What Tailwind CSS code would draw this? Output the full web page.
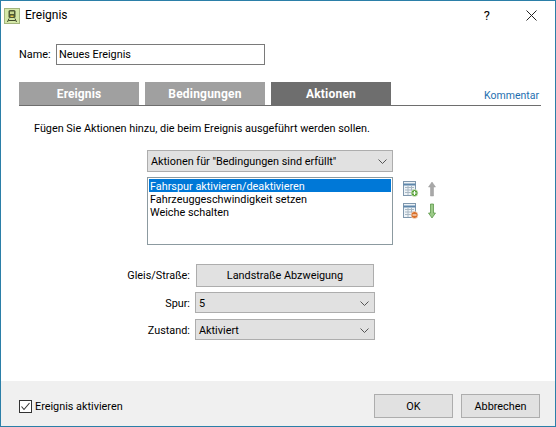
<!DOCTYPE html>
<html>
<head>
<meta charset="utf-8">
<script src="https://cdn.jsdelivr.net/npm/@tailwindcss/browser@4"></script>
</head>
<body class="m-0 bg-white">
<div class="w-[556px] h-[427px] overflow-hidden flex flex-col border border-[#2b7fa8] bg-white text-black font-['Roboto','Noto_Sans',sans-serif] text-[10.85px] leading-[13px]">
  <!-- title bar -->
  <div class="h-[29px] flex items-center shrink-0">
    <svg class="ml-[3px] w-[16px] h-[16px]" viewBox="0 0 16 16">
      <rect x="0.5" y="0.5" width="15" height="15" fill="#d5e8a8" stroke="#a3b47c"/>
      <rect x="4.5" y="2" width="7" height="8" rx="1.5" fill="#4f5a35"/>
      <rect x="6" y="3.5" width="4" height="2.5" fill="#c8d88e"/>
      <rect x="6.5" y="7.5" width="3" height="1.5" fill="#e6c84a"/>
      <path d="M5 10.5 L3.5 14 M11 10.5 L12.5 14 M4.5 12.5 H11.5" stroke="#3f4a2a" stroke-width="1" fill="none"/>
    </svg>
    <span class="ml-[5px] text-[12px]">Ereignis</span>
    <span class="ml-auto text-[13px] mr-[36px]">?</span>
    <svg class="w-[11px] h-[11px] mr-[18px]" viewBox="0 0 11 11"><path d="M0.5 0.5 L10.5 10.5 M10.5 0.5 L0.5 10.5" stroke="#222" stroke-width="1" fill="none"/></svg>
  </div>
  <!-- content -->
  <div class="flex-1 flex flex-col relative">
    <div class="flex items-center mt-[14px] ml-[18px] h-[21px]">
      <span class="w-[37px]">Name:</span>
      <div class="w-[209px] h-[21px] border border-[#7a7a7a] flex items-center pl-[2px]">Neues Ereignis</div>
    </div>
    <div class="mt-[17px] mx-[18px] flex items-stretch h-[24px] border-b border-[#6e6e6e] w-[522px]">
      <div class="w-[120px] h-[23px] pt-[1px] bg-[#a0a0a0] text-white text-[12px] tracking-[0.1px] font-bold flex items-center justify-center">Ereignis</div>
      <div class="w-[120px] h-[23px] pt-[1px] ml-[6px] bg-[#a0a0a0] text-white text-[12px] tracking-[0.2px] font-bold flex items-center justify-center">Bedingungen</div>
      <div class="w-[120px] h-[23px] pt-[1px] ml-[6px] bg-[#6e6e6e] text-white text-[12px] tracking-[0.2px] font-bold flex items-center justify-center">Aktionen</div>
      <span class="ml-auto self-center pt-[3px] text-[#1e6fb0] text-[10.5px] mr-[2px]">Kommentar</span>
    </div>
    <div class="mt-[16px] ml-[33px]">Fügen Sie Aktionen hinzu, die beim Ereignis ausgeführt werden sollen.</div>
    <div class="mt-[15px] ml-[146px] w-[246px] h-[22px] bg-[#e1e1e1] border border-[#adadad] flex items-center pl-[3px] pr-[5px]">
      <span>Aktionen für "Bedingungen sind erfüllt"</span>
      <svg class="ml-auto w-[9px] h-[5px]" viewBox="0 0 9 5"><path d="M0.5 0.5 L4.5 4.5 L8.5 0.5" stroke="#555" fill="none"/></svg>
    </div>
    <div class="mt-[5px] ml-[146px] flex items-start">
      <div class="w-[246px] h-[68px] border border-[#8c9aa0] pt-[1px] px-[1px]">
        <div class="bg-[#0078d7] text-white h-[13px] pt-[1px] pl-[1px] flex items-center">Fahrspur aktivieren/deaktivieren</div>
        <div class="h-[13px] pt-[1px] pl-[1px] flex items-center">Fahrzeuggeschwindigkeit setzen</div>
        <div class="h-[13px] pt-[1px] pl-[1px] flex items-center">Weiche schalten</div>
      </div>
      <div class="ml-[10px] mt-[4px] grid grid-cols-[16px_16px] gap-x-[5px] gap-y-[6px]">
        <svg class="w-[16px] h-[16px]" viewBox="0 0 16 16">
          <rect x="0.5" y="0.5" width="12" height="14" fill="#eef3f7" stroke="#7f97ad"/>
          <path d="M0.5 3.5 H12.5" stroke="#5e86ab" stroke-width="2"/>
          <path d="M2 6.5 H11 M2 9 H11 M2 11.5 H11 M5 5 V14 M8.5 5 V14" stroke="#a9b8c4"/>
          <circle cx="11.5" cy="12" r="3.5" fill="#5aa33c" stroke="#e6f2dc" stroke-width="0.7"/>
          <path d="M9.5 12 H13.5 M11.5 10 V14" stroke="#fff"/>
        </svg>
        <svg class="w-[16px] h-[16px]" viewBox="0 0 16 16"><path d="M8 1 L11.5 6 H9.5 V15 H6.5 V6 H4.5 Z" fill="#a8a8a8" stroke="#989898" stroke-width="0.5"/></svg>
        <svg class="w-[16px] h-[16px]" viewBox="0 0 16 16">
          <rect x="0.5" y="0.5" width="12" height="14" fill="#eef3f7" stroke="#7f97ad"/>
          <path d="M0.5 3.5 H12.5" stroke="#5e86ab" stroke-width="2"/>
          <path d="M2 6.5 H11 M2 9 H11 M2 11.5 H11 M5 5 V14 M8.5 5 V14" stroke="#a9b8c4"/>
          <circle cx="11.5" cy="12" r="3.5" fill="#d9702a" stroke="#f6e2d4" stroke-width="0.7"/>
          <path d="M9.5 12 H13.5" stroke="#fff"/>
        </svg>
        <svg class="w-[16px] h-[16px]" viewBox="0 0 16 16"><path d="M8 15 L11.5 10 H9.5 V1 H6.5 V10 H4.5 Z" fill="#9ccb88" stroke="#4f8f3c" stroke-width="0.7"/></svg>
      </div>
    </div>
    <div class="mt-[19px] ml-[0px] grid grid-cols-[194px_180px] grid-rows-[23px_22px_22px] gap-y-[5px] items-center">
      <span class="text-right pr-[5px]">Gleis/Straße:</span>
      <div class="ml-[1px] w-[178px] h-[23px] bg-[#e1e1e1] border border-[#adadad] flex items-center justify-center">Landstraße Abzweigung</div>
      <span class="text-right pr-[5px]">Spur:</span>
      <div class="w-[180px] h-[21px] self-start pt-[1px] bg-[#e1e1e1] border border-[#adadad] flex items-center pl-[3px] pr-[5px]">5<svg class="ml-auto w-[9px] h-[5px]" viewBox="0 0 9 5"><path d="M0.5 0.5 L4.5 4.5 L8.5 0.5" stroke="#555" fill="none"/></svg></div>
      <span class="text-right pr-[5px]">Zustand:</span>
      <div class="w-[180px] h-[21px] self-start pt-[1px] bg-[#e1e1e1] border border-[#adadad] flex items-center pl-[3px] pr-[5px]">Aktiviert<svg class="ml-auto w-[9px] h-[5px]" viewBox="0 0 9 5"><path d="M0.5 0.5 L4.5 4.5 L8.5 0.5" stroke="#555" fill="none"/></svg></div>
    </div>
    <!-- footer -->
    <div class="mt-auto h-[45px] bg-[#f0f0f0] flex items-center pt-[5px] pl-[18px] pr-[15px]">
      <svg class="w-[13px] h-[13px]" viewBox="0 0 13 13"><rect x="0.5" y="0.5" width="12" height="12" fill="#fff" stroke="#333"/><path d="M2.5 6.5 L5 9.5 L10.5 3" stroke="#333" stroke-width="1.1" fill="none"/></svg>
      <span class="ml-[3px]">Ereignis aktivieren</span>
      <div class="ml-auto w-[79px] h-[24px] bg-[#e1e1e1] border border-[#adadad] flex items-center justify-center">OK</div>
      <div class="ml-[8px] w-[79px] h-[24px] bg-[#e1e1e1] border border-[#adadad] flex items-center justify-center">Abbrechen</div>
    </div>
  </div>
</div>
</body>
</html>
